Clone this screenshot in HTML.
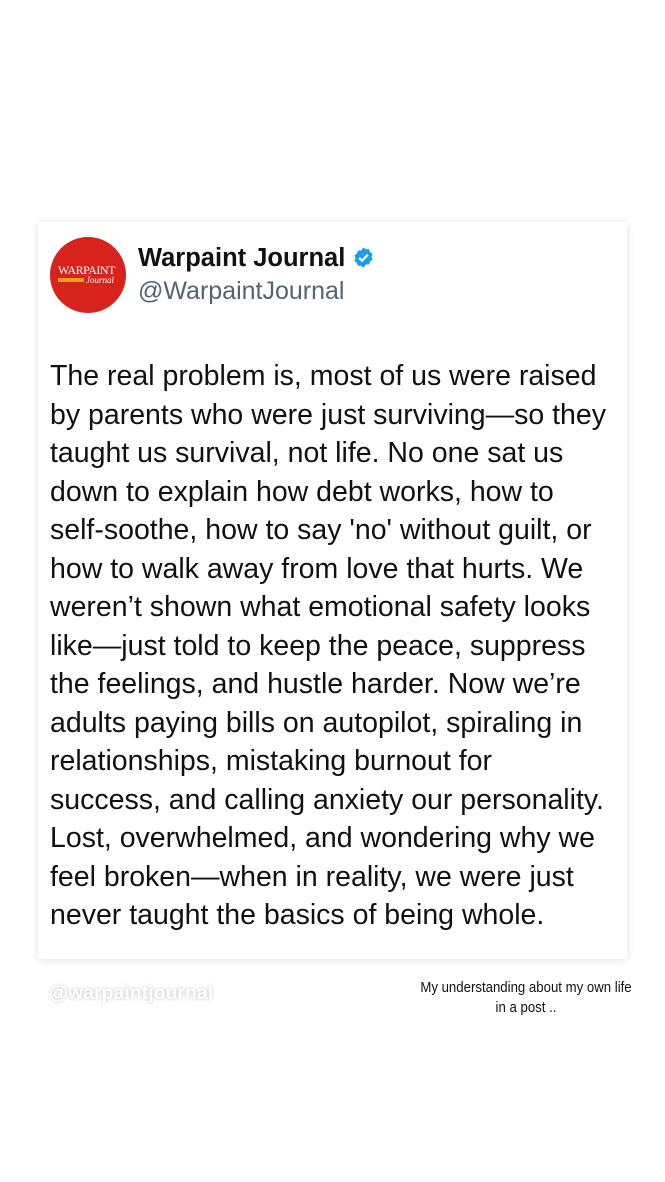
<!DOCTYPE html>
<html><head><meta charset="utf-8"><style>
html,body{margin:0;padding:0;background:#fff;}
body{width:665px;height:1182px;position:relative;overflow:hidden;font-family:"Liberation Sans",Arial,sans-serif;}
.card{position:absolute;left:38px;top:222px;width:589px;height:737px;background:#fff;box-shadow:0 1px 8px rgba(0,0,0,0.12);}
.av{position:absolute;left:50px;top:237px;width:76px;height:76px;border-radius:50%;background:#d8231d;}
.name{position:absolute;left:138px;top:244px;font-size:25.5px;font-weight:bold;color:#111;white-space:nowrap;}
.handle{position:absolute;left:138px;top:277px;font-size:25px;color:#536471;}
.txt{position:absolute;left:50px;top:357px;width:620px;font-size:28.5px;line-height:38.5px;color:#111;white-space:nowrap;}
.wm{position:absolute;left:49px;top:982px;font-size:19.5px;color:#fff;font-weight:bold;text-shadow:0 0 3px rgba(0,0,0,0.25);}
.cap{position:absolute;left:386px;top:978px;width:280px;text-align:center;font-size:15px;line-height:20px;color:#111;transform:scaleX(0.88);}
</style></head><body>
<div class="card"></div>
<div class="av">
<div style="position:absolute;left:8px;top:26px;font-family:'Liberation Serif',serif;font-size:12px;color:#fff;letter-spacing:-0.5px">WARPAINT</div>
<div style="position:absolute;left:8px;top:41px;width:26px;height:4px;background:#f0a020"></div>
<div style="position:absolute;left:36px;top:38px;font-family:'Liberation Serif',serif;font-style:italic;font-size:9px;color:#fff">Journal</div>
</div>
<div class="name">Warpaint Journal <svg width="23" height="23" viewBox="0 0 24 24" style="vertical-align:-3px"><path fill="#1d9bf0" d="M12 1.5l2.6 1.9 3.2-.1 1 3 2.6 1.9-1 3.1 1 3.1-2.6 1.9-1 3-3.2-.1L12 22.5l-2.6-1.9-3.2.1-1-3L2.6 15.8l1-3.1-1-3.1 2.6-1.9 1-3 3.2.1z"/><path d="M7.5 12.3l3 3 6-6.2" stroke="#fff" stroke-width="2.4" fill="none"/></svg></div>
<div class="handle">@WarpaintJournal</div>
<div class="txt">The real problem is, most of us were raised<br>by parents who were just surviving—so they<br>taught us survival, not life. No one sat us<br>down to explain how debt works, how to<br>self-soothe, how to say 'no' without guilt, or<br>how to walk away from love that hurts. We<br>weren’t shown what emotional safety looks<br>like—just told to keep the peace, suppress<br>the feelings, and hustle harder. Now we’re<br>adults paying bills on autopilot, spiraling in<br>relationships, mistaking burnout for<br>success, and calling anxiety our personality.<br>Lost, overwhelmed, and wondering why we<br>feel broken—when in reality, we were just<br>never taught the basics of being whole.</div>
<div class="wm">@warpaintjournal</div>
<div class="cap">My understanding about my own life<br>in a post ..</div>
</body></html>
